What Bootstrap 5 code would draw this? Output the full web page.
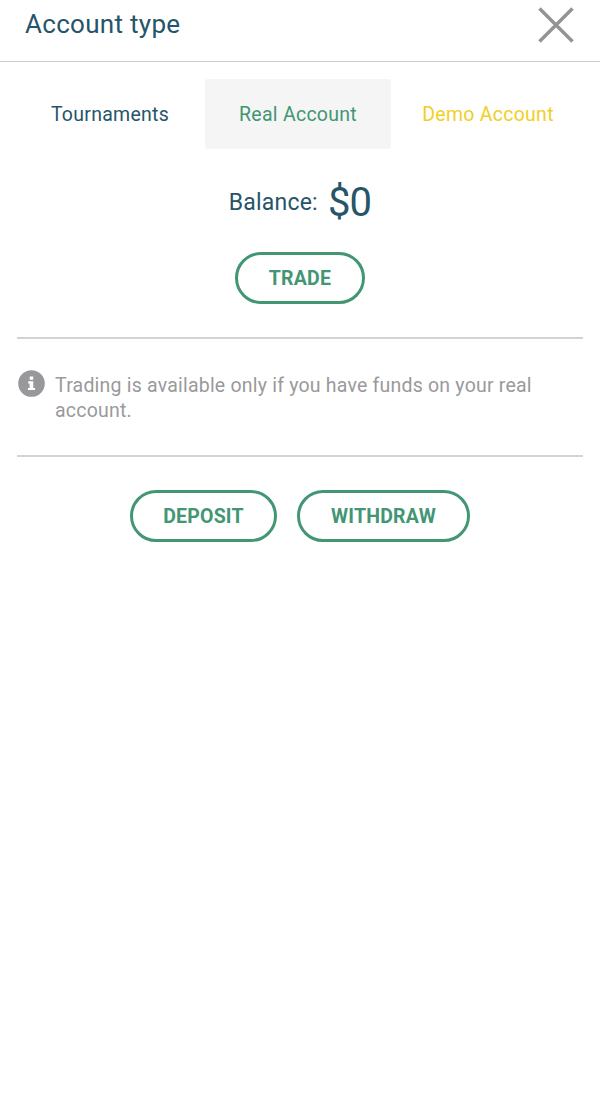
<!doctype html>
<html lang="en">

<head>
    <meta charset="utf-8" />
    <meta name="viewport" content="width=device-width, initial-scale=1" />
    <title>Account type</title>
    <link href="https://cdn.jsdelivr.net/npm/bootstrap@5.3.6/dist/css/bootstrap.min.css" rel="stylesheet" />
    <style>
        body {
            font-family: Roboto, sans-serif;
            color: #265468;
            font-size: 19.5px;
            line-height: 25px;
            letter-spacing: .21px;
        }

        .panel-header {
            height: 62px;
            padding: 0 26px 12px 25px;
            border-bottom: 1px solid #cfcfcf;
        }

        .panel-title {
            font-size: 26px;
            line-height: 30px;
            font-weight: 400;
            letter-spacing: .3px;
            padding-bottom: 2px;
        }

        .close-icon {
            width: 36px;
            height: 36px;
        }

        .account-tabs {
            display: grid;
            grid-template-columns: 188px 186px 1fr;
            padding: 17px 15px 0 17px;
        }

        .account-tabs .nav-link {
            height: 70px;
            color: #265468;
            border-radius: 2px;
            letter-spacing: .27px;
        }

        .account-tabs .nav-link:first-child {
            margin-right: 2px;
        }

        .account-tabs .nav-link.active {
            background: #f5f5f5;
            color: #429674;
        }

        .account-tabs .demo-link {
            color: #f0cf26;
        }

        .balance-row {
            height: 50px;
            margin-top: 28px;
        }

        .balance-label {
            font-size: 23px;
        }

        .balance-value {
            margin-left: 10px;
            padding-top: 2px;
            font-size: 40px;
            line-height: 50px;
            letter-spacing: -.8px;
        }

        .btn-pill {
            --bs-btn-color: #429674;
            --bs-btn-border-color: #429674;
            --bs-btn-border-width: 3px;
            --bs-btn-hover-color: #fff;
            --bs-btn-hover-bg: #429674;
            --bs-btn-font-size: 19.5px;
            --bs-btn-font-weight: 700;
            --bs-btn-line-height: 1;
            --bs-btn-padding-x: 0;
            --bs-btn-padding-y: 0;
            height: 52px;
            padding-top: 2px;
            letter-spacing: .2px;
        }

        .btn-trade {
            width: 130px;
            margin-top: 25px;
        }

        .btn-deposit {
            width: 147px;
        }

        .btn-withdraw {
            width: 173px;
        }

        .notice {
            margin: 33px 17px 0;
            padding: 31px 0 0 1px;
            height: 120px;
            border-top: 2px solid #d3d3d3;
            border-bottom: 2px solid #d3d3d3;
            color: #9a999c;
        }

        .notice p {
            margin-top: 3px;
            margin-left: 10px;
        }

        .actions {
            gap: 20px;
            margin-top: 33px;
        }
    </style>
</head>

<body>
    <header class="panel-header d-flex align-items-center justify-content-between">
        <h1 class="panel-title mb-0">Account type</h1>
        <a href="#" class="d-flex" aria-label="Close">
            <svg class="close-icon" viewBox="0 0 36 36" fill="none" stroke="#939393" stroke-width="3.4">
                <path d="M1.500 1.500l33 33M34.500 1.500l-33 33" />
            </svg>
        </a>
    </header>

    <main>
        <nav class="account-tabs">
            <a class="nav-link d-flex align-items-center justify-content-center p-0" href="#">Tournaments</a>
            <a class="nav-link active d-flex align-items-center justify-content-center p-0" href="#">Real Account</a>
            <a class="nav-link demo-link d-flex align-items-center justify-content-center p-0" href="#">Demo Account</a>
        </nav>

        <div class="balance-row d-flex align-items-center justify-content-center">
            <span class="balance-label">Balance:</span>
            <span class="balance-value">$0</span>
        </div>

        <div class="text-center">
            <button type="button" class="btn btn-pill btn-trade rounded-pill">TRADE</button>
        </div>

        <div class="notice d-flex align-items-start">
            <svg class="flex-shrink-0" width="27" height="27" viewBox="0 0 27 27">
                <circle cx="13.5" cy="13.5" r="13.3" fill="#98979b" />
                <path fill="#fff" d="M11.700 6.500h3.600v3.200h-3.600zM10.200 11.200h5.100v6.800h1.800v2.100h-7.200v-2.100h1.700v-4.600h-1.400z" />
            </svg>
            <p class="mb-0">Trading is available only if you have funds on your real account.</p>
        </div>

        <div class="actions d-flex justify-content-center">
            <button type="button" class="btn btn-pill btn-deposit rounded-pill">DEPOSIT</button>
            <button type="button" class="btn btn-pill btn-withdraw rounded-pill">WITHDRAW</button>
        </div>
    </main>

    <script src="https://cdn.jsdelivr.net/npm/bootstrap@5.3.6/dist/js/bootstrap.bundle.min.js"></script>
</body>

</html>
